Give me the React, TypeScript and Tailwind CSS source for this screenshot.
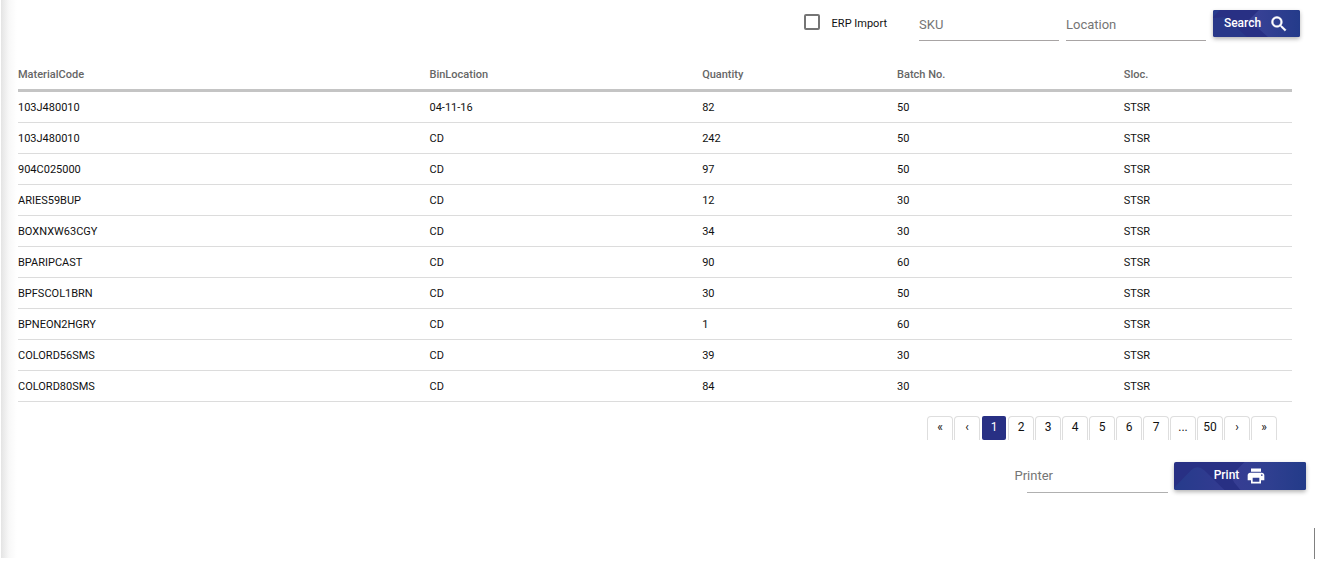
import { useState } from 'react';

const columns = ['MaterialCode', 'BinLocation', 'Quantity', 'Batch No.', 'Sloc.'];

const rows = [
  ['103J480010', '04-11-16', '82', '50', 'STSR'],
  ['103J480010', 'CD', '242', '50', 'STSR'],
  ['904C025000', 'CD', '97', '50', 'STSR'],
  ['ARIES59BUP', 'CD', '12', '30', 'STSR'],
  ['BOXNXW63CGY', 'CD', '34', '30', 'STSR'],
  ['BPARIPCAST', 'CD', '90', '60', 'STSR'],
  ['BPFSCOL1BRN', 'CD', '30', '50', 'STSR'],
  ['BPNEON2HGRY', 'CD', '1', '60', 'STSR'],
  ['COLORD56SMS', 'CD', '39', '30', 'STSR'],
  ['COLORD80SMS', 'CD', '84', '30', 'STSR'],
];

const pages = ['«', '‹', '1', '2', '3', '4', '5', '6', '7', '...', '50', '›', '»'];

function SearchIcon() {
  return (
    <svg viewBox="0 0 24 24" className="size-5" fill="currentColor" stroke="currentColor" strokeWidth="0.6" aria-hidden="true">
      <path d="M15.5 14h-.79l-.28-.27A6.47 6.47 0 0 0 16 9.5 6.5 6.5 0 1 0 9.5 16c1.61 0 3.09-.59 4.23-1.57l.27.28v.79l5 4.99L20.49 19l-4.99-5zm-6 0C7.01 14 5 11.99 5 9.5S7.01 5 9.5 5 14 7.01 14 9.5 11.99 14 9.5 14z" />
    </svg>
  );
}

function PrintIcon() {
  return (
    <svg viewBox="0 0 24 24" className="size-5" fill="currentColor" aria-hidden="true">
      <path d="M19 8H5c-1.66 0-3 1.34-3 3v6h4v4h12v-4h4v-6c0-1.66-1.34-3-3-3zm-3 11H8v-5h8v5zm3-7c-.55 0-1-.45-1-1s.45-1 1-1 1 .45 1 1-.45 1-1 1zm-1-9H6v4h12V3z" />
    </svg>
  );
}

function SearchPattern() {
  return (
    <svg viewBox="0 0 87 27" preserveAspectRatio="none" className="absolute inset-0 size-full" aria-hidden="true">
      <defs>
        <linearGradient id="search-right" x1="0" x2="1">
          <stop offset="0" stopColor="#3b4297" />
          <stop offset="1" stopColor="#243b8a" />
        </linearGradient>
      </defs>
      <path d="M0 0H7L0 7Z" fill="#273b8c" />
      <path d="M0 27V8L12 7L34 27Z" fill="#293889" />
      <path d="M46 0H87V27H55L36 10Z" fill="url(#search-right)" />
    </svg>
  );
}

function PrintPattern() {
  return (
    <svg viewBox="0 0 131 27" preserveAspectRatio="none" className="absolute inset-0 size-full" aria-hidden="true">
      <defs>
        <linearGradient id="print-right" x1="0" x2="1">
          <stop offset="0" stopColor="#373d93" />
          <stop offset="0.5" stopColor="#2f3f90" />
          <stop offset="1" stopColor="#233b89" />
        </linearGradient>
        <linearGradient id="print-left" x1="0" x2="1">
          <stop offset="0" stopColor="#263b8b" />
          <stop offset="1" stopColor="#333b91" />
        </linearGradient>
      </defs>
      <path d="M0 25L17 8Q23 2 30 8L50 27H0Z" fill="url(#print-left)" />
      <path d="M70 0H131V27H66L60 20Q56 15 60 10Z" fill="url(#print-right)" />
    </svg>
  );
}

export default function App() {
  const [page, setPage] = useState('1');

  return (
    <div className="bg-white pl-px font-['Roboto',sans-serif] text-xs text-[#111]">
      <div className="flex">
        <div className="w-4 shrink-0 bg-linear-to-r from-[#e4e4e4] via-[#f8f8f8] to-white" />
        <main className="flex min-w-0 grow flex-col pb-[65px] pl-px">
          <form className="flex justify-end gap-[7px] pt-[10px] pr-[25px]" onSubmit={(e) => e.preventDefault()}>
            <label className="mr-[25px] flex h-7 items-center gap-3 text-[11px]">
              <input
                type="checkbox"
                className="-mt-1 size-4 appearance-none rounded-xs border-2 border-[#757575] checked:bg-[#283084]"
              />
              ERP Import
            </label>
            <input
              aria-label="SKU"
              placeholder="SKU"
              className="h-[31px] w-[140px] border-b border-[#a8a4a4] pb-[2px] text-[13px] outline-none placeholder:text-[#757575]"
            />
            <input
              aria-label="Location"
              placeholder="Location"
              className="h-[31px] w-[140px] border-b border-[#a8a4a4] pb-[2px] text-[13px] outline-none placeholder:text-[#757575]"
            />
            <button
              type="submit"
              className="relative h-[27px] w-[87px] overflow-hidden rounded-xs bg-[#283084] font-medium text-white shadow-[0_2px_4px_rgba(0,0,0,0.3)]"
            >
              <SearchPattern />
              <span className="relative flex items-center justify-center gap-2">
                <span className="-mt-px">Search</span>
                <SearchIcon />
              </span>
            </button>
          </form>

          <div className="mt-[18px] pr-[33px]">
            <table className="w-full table-fixed border-separate border-spacing-0 text-left">
              <colgroup>
                <col className="w-[32.3%]" />
                <col className="w-[21.4%]" />
                <col className="w-[15.3%]" />
                <col className="w-[17.8%]" />
                <col />
              </colgroup>
              <thead>
                <tr>
                  {columns.map((c) => (
                    <th key={c} scope="col" className="h-[33px] border-b-3 border-[#c4c4c4] p-0 pt-[2px] text-[11px] font-medium text-[#666]">
                      {c}
                    </th>
                  ))}
                </tr>
              </thead>
              <tbody>
                {rows.map((row, i) => (
                  <tr key={i}>
                    {row.map((cell, j) => (
                      <td key={j} className="h-[31px] border-b border-[#dcdcdc] p-0 pt-[2px] text-[11px]">
                        {cell}
                      </td>
                    ))}
                  </tr>
                ))}
              </tbody>
            </table>
          </div>

          <nav aria-label="Pages" className="mt-[14px] flex justify-end gap-px pr-12">
            {pages.map((p) => (
              <button
                key={p}
                type="button"
                onClick={() => setPage(p)}
                aria-current={p === page ? 'page' : undefined}
                className={
                  p === page
                    ? 'mx-px h-6 w-6 rounded-xs bg-[#283084] pb-[2px] text-white'
                    : 'h-6 w-[26px] rounded-t-sm border-x border-t border-[#dedede] pb-[3px]'
                }
              >
                {p}
              </button>
            ))}
          </nav>

          <form className="mt-[22px] flex justify-end gap-[6px] pr-[19px]" onSubmit={(e) => e.preventDefault()}>
            <label className="flex text-[13px] text-[#757575]">
              <span className="-mr-[26px] pt-[5px]">Printer</span>
              <input className="h-[31px] w-[141px] border-b border-[#b0b0b0] outline-none" />
            </label>
            <button
              type="submit"
              className="relative h-7 w-[132px] overflow-hidden rounded-xs bg-[#283084] font-medium text-white shadow-[0_2px_4px_rgba(0,0,0,0.3)]"
            >
              <PrintPattern />
              <span className="relative flex items-center justify-center gap-[7px]">
                <span className="-mt-[3px]">Print</span>
                <PrintIcon />
              </span>
            </button>
          </form>
        </main>
      </div>
      <div className="-mt-[30px] ml-auto mr-[10px] h-[31px] w-px bg-[#808080]" />
    </div>
  );
}
